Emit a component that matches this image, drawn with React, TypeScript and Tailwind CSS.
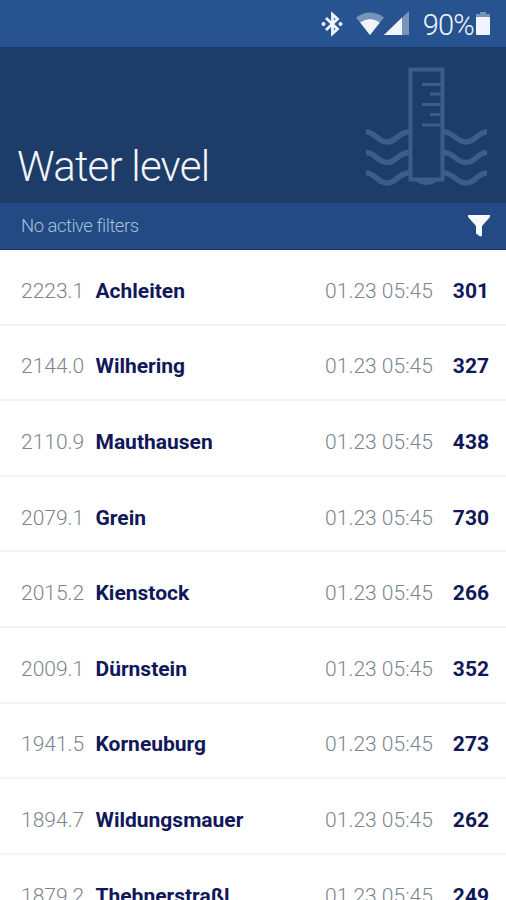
type Station = {
  km: string
  name: string
  time: string
  level: number
}

const stations: Station[] = [
  { km: '2223.1', name: 'Achleiten', time: '01.23 05:45', level: 301 },
  { km: '2144.0', name: 'Wilhering', time: '01.23 05:45', level: 327 },
  { km: '2110.9', name: 'Mauthausen', time: '01.23 05:45', level: 438 },
  { km: '2079.1', name: 'Grein', time: '01.23 05:45', level: 730 },
  { km: '2015.2', name: 'Kienstock', time: '01.23 05:45', level: 266 },
  { km: '2009.1', name: 'Dürnstein', time: '01.23 05:45', level: 352 },
  { km: '1941.5', name: 'Korneuburg', time: '01.23 05:45', level: 273 },
  { km: '1894.7', name: 'Wildungsmauer', time: '01.23 05:45', level: 262 },
  { km: '1879.2', name: 'Thebnerstraßl', time: '01.23 05:45', level: 249 },
]

export default function App() {
  return (
    <div className="flex h-screen flex-col overflow-hidden bg-white font-['Roboto',sans-serif]">
      <StatusBar />

      {/* Header */}
      <header className="flex h-[156px] shrink-0 items-end justify-between bg-[#1d3c67] pr-[18px] pl-[17px]">
        <h1 className="pb-[11px] text-[42px] leading-[50px] font-light tracking-[-0.8px] whitespace-nowrap text-[#f1f4fa]">Water level</h1>
        <GaugeIcon />
      </header>

      {/* Filter bar */}
      <div className="flex h-[47px] shrink-0 items-center justify-between border-b border-[#153a70] bg-[#234a82] pr-4 pl-[21px]">
        <span className="text-[18.5px] leading-6 font-light tracking-[-0.5px] text-[#a3c0dc]">No active filters</span>
        <FilterIcon />
      </div>

      {/* Stations */}
      <ul className="flex flex-col">
        {stations.map(s => (
          <StationRow key={s.km} station={s} />
        ))}
      </ul>
    </div>
  )
}

function StationRow({ station }: { station: Station }) {
  return (
    <li className="flex h-[75.6px] shrink-0 items-center border-b-2 border-[#f3f3f4] pt-2 pr-[17px] pl-[21px] text-[21px] leading-6 whitespace-nowrap">
      <span className="w-[74.5px] font-light text-[#7c858f]">{station.km}</span>
      <span className="flex-1 font-bold text-[#10185a]">{station.name}</span>
      <span className="mr-5 font-light text-[#7c858f]">{station.time}</span>
      <span className="font-bold text-[#10185a]">{station.level}</span>
    </li>
  )
}

function StatusBar() {
  return (
    <div className="flex h-[47px] shrink-0 items-center justify-end bg-[#275491] pr-4 text-[#f1f5fb]">
      {/* Bluetooth */}
      <svg className="mr-[13px]" width="23" height="26" viewBox="0 0 23 26" fill="none" stroke="currentColor" strokeWidth="2.8">
        <path d="M6 7L17.500 18L12.500 22.500V3.500L17.500 8L6 19" />
        <circle cx="3.500" cy="13" r="2" fill="currentColor" stroke="none" />
        <circle cx="20.500" cy="13" r="2" fill="currentColor" stroke="none" />
      </svg>
      {/* Wi-Fi */}
      <svg width="28" height="24" viewBox="0 0 28 24" fill="currentColor">
        <path d="M0 5.5Q14 -4.500 28 5.500L14 23Z" opacity="0.4" />
        <path d="M4.200 10.500Q14 3.500 23.800 10.500L14 23Z" />
      </svg>
      {/* Cell signal */}
      <svg width="25" height="25" viewBox="0 0 25 25" fill="currentColor">
        <path d="M0 24L25 0V24Z" opacity="0.4" />
        <path d="M0 24L18 6.500V24Z" />
      </svg>
      <span className="ml-[14px] pt-[2px] text-[29px] leading-8 font-light tracking-[-0.8px]">90%</span>
      {/* Battery */}
      <svg className="ml-[2px]" width="14" height="24" viewBox="0 0 14 24" fill="currentColor">
        <path d="M4 0H10V2H14V6H0V2H4Z" opacity="0.4" />
        <rect y="5" width="14" height="18" rx="1" />
      </svg>
    </div>
  )
}

// Water gauge with three waves running behind it
function GaugeIcon() {
  return (
    <svg className="mb-[15px] shrink-0" width="122" height="122" viewBox="366 66 122 122" fill="none" stroke="#3c5d8b" strokeWidth="4">
      <path d="M410.500 69.500H442.500V179.500H410.500Z" />
      <path d="M422 84.500H441M430 94H441M422 104.500H441M430 114.500H441M422 125H441" strokeWidth="3" />
      {[132, 152.500, 173].map(y => (
        <g key={y} transform={`translate(0 ${y})`} strokeWidth="5.500">
          <path d="M366 0C376 0 377 10 387 10S398 0 409 0" />
          <path d="M444 0C454 0 456 10 466 10S477 0 487 0" />
        </g>
      ))}
      <path d="M412 180H441C435 181 434 185 426.500 185S418 181 412 180Z" fill="#3c5d8b" stroke="none" />
    </svg>
  )
}

function FilterIcon() {
  return (
    <svg width="22" height="22" viewBox="0 0 22 22" fill="#f8faff">
      <path d="M0 0H22V2L14 11V20.500Q13.500 21.500 12 21.500L8 18.500V11L0 2Z" />
    </svg>
  )
}
